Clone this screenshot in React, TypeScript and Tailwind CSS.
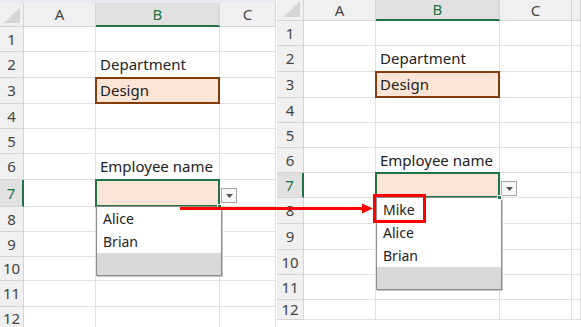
const font = { fontFamily: '"Noto Sans", "Noto Sans CJK JP", sans-serif' };

const rowsLeft = ["h-[25px]", "h-[26px]", "h-[26px]", "h-[25px]", "h-[25px]", "h-[26px]", "h-[27px]", "h-[25px]", "h-[25px]", "h-[24px]", "h-[26px]", "h-[26px]"];
const rowsRight = ["h-[25px]", "h-[26px]", "h-[26px]", "h-[25px]", "h-[25px]", "h-[25px]", "h-[25px]", "h-[26px]", "h-[26px]", "h-[25px]", "h-[25px]", "h-[20px]"];

type Variant = "before" | "after";

function CornerTriangle() {
  return (
    <svg width="16" height="16" viewBox="0 0 16 16" className="absolute right-[3px] bottom-[3px]">
      <polygon points="16,0 16,16 0,16" fill="#d6d6d6" />
    </svg>
  );
}

function DropdownButton() {
  return (
    <div className="absolute left-full top-[8px] ml-[2px] w-[16px] h-[15px] border border-[#a6a6a6] bg-[#f7f7f7] flex items-center justify-center z-20">
      <svg width="7" height="4" viewBox="0 0 7 4">
        <polygon points="0,0 7,0 3.5,4" fill="#555" />
      </svg>
    </div>
  );
}

function DropdownList({ variant }: { variant: Variant }) {
  const names = variant === "after" ? ["Mike", "Alice", "Brian"] : ["Alice", "Brian"];
  return (
    <div className="absolute left-0 top-full w-[126px] border border-[#8c8c8c] bg-white z-20 shadow-[1px_1px_0_#c8c8c8]">
      {names.map((n) => (
        <div key={n} className="relative h-[23px] pl-[6px] flex items-center text-[14px] text-[#222]">
          {n}
          {n === "Mike" && (
            <div className="absolute -left-[4px] -top-[4px] w-[53px] h-[29px] border-[3px] border-[#ff0000]" />
          )}
        </div>
      ))}
      <div className="h-[22px] bg-[#d9d9d9]" />
    </div>
  );
}

function Sheet({ variant }: { variant: Variant }) {
  const isLeft = variant === "before";
  const rows = isLeft ? rowsLeft : rowsRight;
  const rowHeadW = isLeft ? "w-[24px]" : "w-[27px]";
  const cols = isLeft
    ? [{ k: "A", w: "w-[72px]" }, { k: "B", w: "w-[124px]" }, { k: "C", w: "w-[56px]" }]
    : [{ k: "A", w: "w-[72px]" }, { k: "B", w: "w-[124px]" }, { k: "C", w: "w-[72px]" }, { k: "", w: "w-[9px]" }];

  return (
    <div className={`flex flex-col overflow-hidden ${isLeft ? "w-[276px] h-[327px]" : "w-[304px] h-[320px]"}`}>
      {isLeft && <div className="h-[3px] bg-[#e9e9ef] shrink-0" />}

      {/* column header */}
      <div className={`flex shrink-0 ${isLeft ? "h-[24px]" : "h-[21px]"}`}>
        <div className={`relative ${rowHeadW} shrink-0 bg-[#f0f0f0] border-r border-b border-[#d4d4d4]`}>
          <CornerTriangle />
        </div>
        {cols.map((c) => (
          <div
            key={c.w + c.k}
            className={`${c.w} shrink-0 flex items-center justify-center text-[15px] border-r ${
              c.k === "B"
                ? "bg-[#e1e1e1] text-[#217346] border-b-2 border-b-[#217346] border-r-[#d4d4d4]"
                : "bg-[#f0f0f0] text-[#444] border-b border-[#d4d4d4]"
            }`}
          >
            {c.k}
          </div>
        ))}
      </div>

      {rows.map((h, i) => {
        const r = i + 1;
        const sel = r === 7;
        const last = isLeft && r === 12;
        return (
          <div key={r} className={`flex shrink-0 ${h}`}>
            <div
              className={`${rowHeadW} shrink-0 flex justify-center text-[15px] border-b border-[#d4d4d4] ${
                last ? "items-start" : "items-center"
              } ${
                sel
                  ? "bg-[#e1e1e1] text-[#217346] border-r-2 border-r-[#217346]"
                  : "bg-[#f0f0f0] text-[#444] border-r border-r-[#d4d4d4]"
              }`}
            >
              {r}
            </div>
            {cols.map((c) => {
              const isB = c.k === "B";
              let content: React.ReactNode = null;
              let cls = "";
              if (isB && r === 2) content = "Department";
              if (isB && r === 6) content = "Employee name";
              if (isB && r === 3) {
                content = "Design";
                cls = "relative bg-[#fce4d6]";
              }
              if (isB && r === 7) cls = "relative bg-[#fce4d6]";
              return (
                <div
                  key={c.w + c.k}
                  className={`${c.w} shrink-0 border-r border-b border-[#e1e1e1] flex items-center pl-[4px] text-[15px] text-[#222] whitespace-nowrap ${cls}`}
                >
                  {content}
                  {isB && r === 3 && (
                    <div className="absolute -left-px -top-px -right-px -bottom-px border-2 border-[#843c0c]" />
                  )}
                  {isB && r === 7 && (
                    <>
                      <div className="absolute -left-px -top-px -right-px -bottom-px border-2 border-[#217346]" />
                      <div className="absolute -right-[3px] -bottom-[3px] w-[5px] h-[5px] bg-[#217346] border border-white z-30" />
                      <DropdownButton />
                      <DropdownList variant={variant} />
                    </>
                  )}
                </div>
              );
            })}
          </div>
        );
      })}
    </div>
  );
}

export default function App() {
  return (
    <div className="relative w-[581px] h-[327px] bg-white overflow-hidden" style={font}>
      <div className="flex gap-px items-start">
        <Sheet variant="before" />
        <Sheet variant="after" />
      </div>

      {/* red arrow linking the two dropdowns */}
      <svg className="absolute left-0 top-0 z-40 pointer-events-none" width="581" height="327">
        <line x1="180" y1="208.5" x2="364" y2="208.5" stroke="#ff0000" strokeWidth="3" />
        <polygon points="362,203.5 373,208.5 362,213.5" fill="#ff0000" />
      </svg>
    </div>
  );
}
